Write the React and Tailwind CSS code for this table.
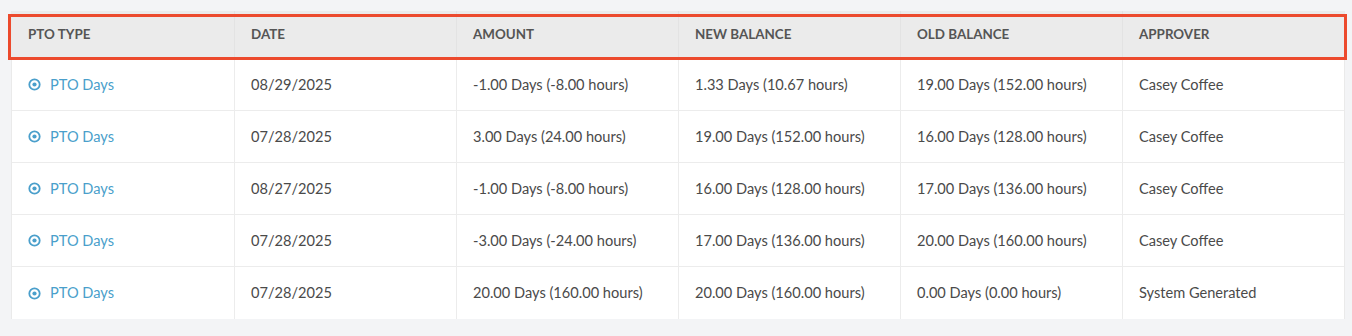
import React from "react";

const rows = [
  ["08/29/2025", "-1.00 Days (-8.00 hours)", "1.33 Days (10.67 hours)", "19.00 Days (152.00 hours)", "Casey Coffee"],
  ["07/28/2025", "3.00 Days (24.00 hours)", "19.00 Days (152.00 hours)", "16.00 Days (128.00 hours)", "Casey Coffee"],
  ["08/27/2025", "-1.00 Days (-8.00 hours)", "16.00 Days (128.00 hours)", "17.00 Days (136.00 hours)", "Casey Coffee"],
  ["07/28/2025", "-3.00 Days (-24.00 hours)", "17.00 Days (136.00 hours)", "20.00 Days (160.00 hours)", "Casey Coffee"],
  ["07/28/2025", "20.00 Days (160.00 hours)", "20.00 Days (160.00 hours)", "0.00 Days (0.00 hours)", "System Generated"],
];

const headers = ["PTO TYPE", "DATE", "AMOUNT", "NEW BALANCE", "OLD BALANCE", "APPROVER"];

function Icon() {
  return (
    <svg width="13" height="13" viewBox="0 0 13 13" className="shrink-0">
      <circle cx="6.5" cy="6.5" r="5.2" fill="none" stroke="#4a9fcb" strokeWidth="1.8" />
      <circle cx="6.5" cy="6.5" r="2.1" fill="#4a9fcb" />
    </svg>
  );
}

export default function App() {
  return (
    <div
      className="relative w-[1352px] h-[336px] bg-[#f3f4f6] pt-[11px] pl-[11px] pr-[7px]"
      style={{ fontFamily: "Lato, 'Open Sans', sans-serif" }}
    >
      <div className="w-[1334px] bg-white border-l border-r border-[#eaeaea]">
        <div className="grid grid-cols-6 h-[48px] bg-[#ebebeb] border-b border-[#e2e2e2]">
          {headers.map((h, i) => (
            <div
              key={h}
              className={`flex items-center pl-[16px] text-[13.4px] font-bold text-[#555] ${i > 0 ? "border-l border-[#e3e3e3]" : ""}`}
            >
              {h}
            </div>
          ))}
        </div>
        {rows.map((r, ri) => (
          <div
            key={ri}
            className={`grid grid-cols-6 h-[52px] ${ri < rows.length - 1 ? "border-b border-[#ececec]" : ""}`}
          >
            <div className="flex items-center pl-[16px] gap-[9px] text-[14.6px] text-[#4a9fcb]">
              <Icon />
              <span>PTO Days</span>
            </div>
            {r.map((c, ci) => (
              <div
                key={ci}
                className="flex items-center pl-[16px] border-l border-[#ececec] text-[14.6px] text-[#4a4a4a]"
              >
                {c}
              </div>
            ))}
          </div>
        ))}
      </div>
      <div className="absolute left-[8px] top-[14px] w-[1339px] h-[46px] border-[3px] border-[#ec4a2d] pointer-events-none" />
    </div>
  );
}
